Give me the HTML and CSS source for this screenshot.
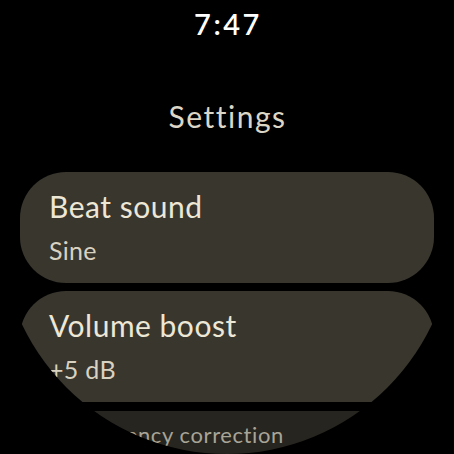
FILE: index.html
```html
<!DOCTYPE html>
<html>
<head>
<meta charset="utf-8">
<link rel="stylesheet" href="styles.css">
</head>
<body>
<div class="screen">
  <div class="time">7:47</div>
  <div class="heading">Settings</div>
  <div class="list">
    <div class="card">
      <div class="title">Beat sound</div>
      <div class="sub">Sine</div>
    </div>
    <div class="card">
      <div class="title">Volume boost</div>
      <div class="sub">+5 dB</div>
    </div>
    <div class="card card-far">
      <div class="title-far">Latency correction</div>
    </div>
  </div>
</div>
</body>
</html>
```

FILE: styles.css
```css
html, body {
  margin: 0;
  padding: 0;
  background: #000;
}
.screen {
  width: 454px;
  height: 454px;
  background: #000;
  overflow: hidden;
  clip-path: circle(227px at 227px 227px);
  display: flex;
  flex-direction: column;
  align-items: center;
  font-family: Lato, "Noto Sans", sans-serif;
}
.time {
  margin-top: 7px;
  font-size: 29px;
  line-height: 34px;
  font-weight: 600;
  color: #fff;
  letter-spacing: 2.5px;
  padding-left: 2px;
}
.heading {
  margin-top: 57px;
  font-size: 30px;
  line-height: 36px;
  color: #dcd6c6;
  letter-spacing: 1.5px;
  padding-left: 1px;
}
.list {
  margin-top: 38px;
  width: 414px;
  display: flex;
  flex-direction: column;
  gap: 8px;
}
.card {
  background: #39362e;
  border-radius: 46px;
  height: 111px;
  box-sizing: border-box;
  padding: 16px 29px 0;
  flex-shrink: 0;
}
.title {
  font-size: 30px;
  line-height: 36px;
  color: #ede7d6;
  letter-spacing: 0.5px;
}
.sub {
  margin-top: 11px;
  font-size: 25px;
  line-height: 30px;
  color: #d8d2c2;
  letter-spacing: 0.3px;
}
.card-far {
  background: #27251f;
  margin-top: 1px;
  padding-top: 10px;
  padding-left: 74px;
}
.title-far {
  font-size: 22px;
  line-height: 27px;
  color: #a8a497;
  letter-spacing: 0.6px;
}
```
